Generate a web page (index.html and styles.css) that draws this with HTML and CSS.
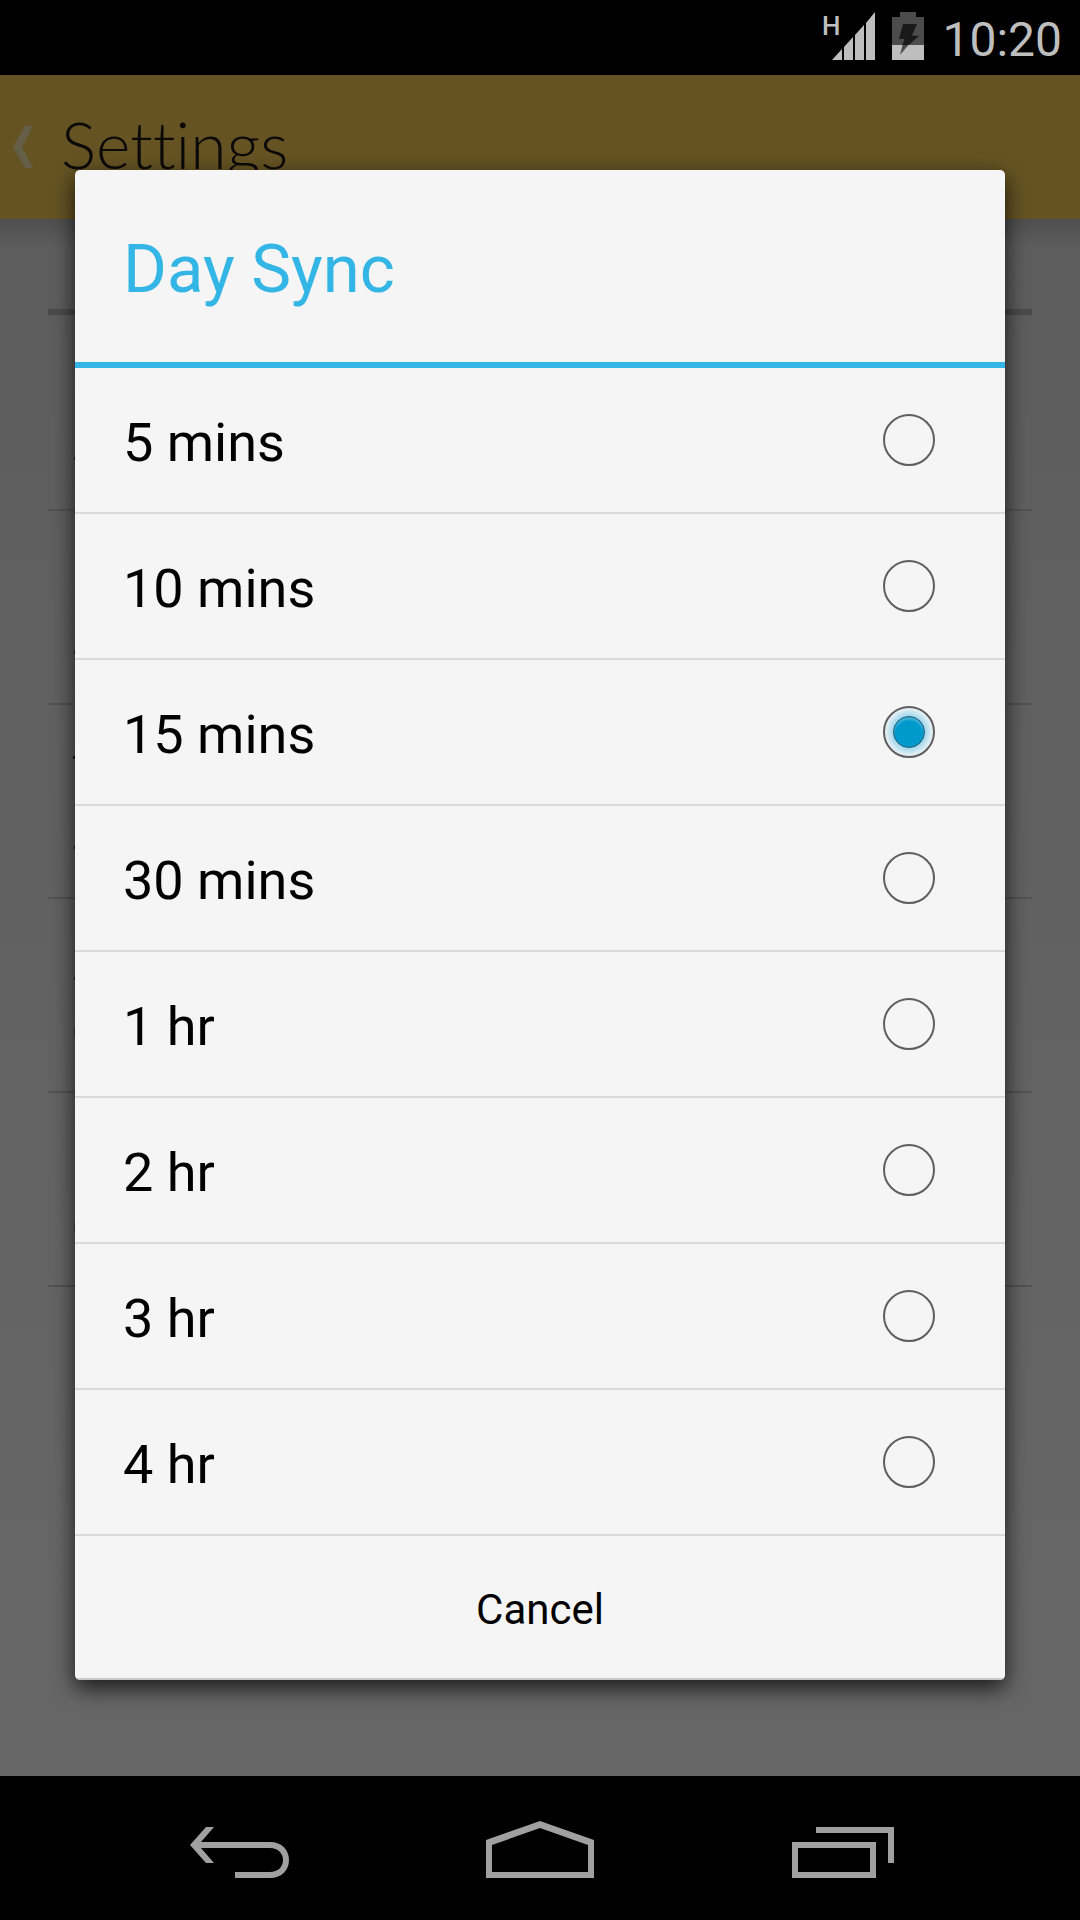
FILE: index.html
```html
<!DOCTYPE html>
<html lang="en">
<head>
<meta charset="utf-8">
<meta name="viewport" content="width=device-width, initial-scale=1">
<title>Settings</title>
<link rel="stylesheet" href="styles.css">
</head>
<body>
<div class="screen">
  <header class="status">
    <span class="network">H</span>
    <svg class="signal" viewBox="0 0 43 48" aria-hidden="true"><path d="M0 48 10 37V48ZM12 35 21 25V48H12ZM23 23 32 13V48H23ZM34 11 43 0V48H34Z"/></svg>
    <svg class="battery" viewBox="0 0 32 48" aria-hidden="true">
      <path fill="#4c4c4c" d="M8 0H24V5H32V33H0V5H8Z"/>
      <path fill="#bebebe" d="M0 33H32V48H0Z"/>
      <path fill="#1a1a1a" d="M11 12H25L20 23.500 27 24 16.500 33H10.500L12.500 27H7Z"/>
      <path fill="#4c4c4c" d="M10.500 33H16.500L8 43Z"/>
    </svg>
    <time class="clock">10:20</time>
  </header>

  <main class="stage">
    <div class="page">
      <div class="appbar">
        <svg class="chevron" viewBox="0 0 20 42" aria-hidden="true"><path d="M12 0H20L9 21 20 42H12L0 21Z"/></svg>
        <h1 class="page-title">Settings</h1>
      </div>
      <div class="content">
        <div class="section-head"></div>
        <div class="pref"><svg class="edge" viewBox="0 0 2 192"><path d="M1 142h1v3h-1z"/></svg></div>
        <div class="pref"><svg class="edge" viewBox="0 0 2 192"><path d="M1 140h1v3h-1z"/></svg></div>
        <div class="pref"><svg class="edge" viewBox="0 0 2 192"><path d="M0 51h2v3h-2zM1 141h1v3h-1z"/></svg></div>
        <div class="pref"><svg class="edge" viewBox="0 0 2 192"><path d="M1 78h1v3h-1z"/><path class="faint" d="M1 129h1v9h-1z"/></svg></div>
        <div class="pref"><svg class="edge" viewBox="0 0 2 192"><path class="faint" d="M1 129h1v9h-1z"/></svg></div>
      </div>
    </div>

    <form class="dialog" role="dialog" aria-labelledby="dialog-title">
      <h2 class="dialog-title" id="dialog-title">Day Sync</h2>
      <label class="option"><span class="option-text">5 mins</span><input class="radio" type="radio" name="sync" value="5"></label>
      <label class="option"><span class="option-text">10 mins</span><input class="radio" type="radio" name="sync" value="10"></label>
      <label class="option"><span class="option-text">15 mins</span><input class="radio" type="radio" name="sync" value="15" checked></label>
      <label class="option"><span class="option-text">30 mins</span><input class="radio" type="radio" name="sync" value="30"></label>
      <label class="option"><span class="option-text">1 hr</span><input class="radio" type="radio" name="sync" value="60"></label>
      <label class="option"><span class="option-text">2 hr</span><input class="radio" type="radio" name="sync" value="120"></label>
      <label class="option"><span class="option-text">3 hr</span><input class="radio" type="radio" name="sync" value="180"></label>
      <label class="option"><span class="option-text">4 hr</span><input class="radio" type="radio" name="sync" value="240"></label>
      <button class="cancel" type="button">Cancel</button>
    </form>
  </main>

  <nav class="navbar">
    <button class="nav-button" type="button" aria-label="Back">
      <svg class="nav-icon" viewBox="0 0 108 60"><path d="M4 27 20 9H28L15 24H84C96 24 103 32 103 42S96 60 84 60H49V54H84C92 54 97 49 97 42S92 30 84 30H15L28 45H20Z"/></svg>
    </button>
    <button class="nav-button" type="button" aria-label="Home">
      <svg class="nav-icon" viewBox="0 0 108 60"><path fill-rule="evenodd" d="M0 22 54 3 108 22V60H0ZM6 27V54H102V27L54 10Z"/></svg>
    </button>
    <button class="nav-button" type="button" aria-label="Recent apps">
      <svg class="nav-icon" viewBox="0 0 108 60"><path fill-rule="evenodd" d="M30 9H108V45H102V15H30ZM6 24H90V60H6ZM12 30V54H84V30Z"/></svg>
    </button>
  </nav>
</div>
</body>
</html>
```
FILE: styles.css
```css
* {
  box-sizing: border-box;
}

body {
  margin: 0;
  background: #000;
  font-family: Roboto, "Liberation Sans", sans-serif;
}

.screen {
  display: flex;
  flex-direction: column;
  min-height: 100vh;
}

/* Status bar */
.status {
  display: flex;
  justify-content: flex-end;
  height: 75px;
  padding: 12px 18px 0 0;
  color: #bebebe;
}

.network {
  margin-right: -8px;
  font-size: 26px;
  font-weight: 500;
  line-height: 28px;
}

.signal {
  width: 43px;
  height: 48px;
  margin-right: 17px;
  fill: #bebebe;
}

.battery {
  width: 32px;
  height: 48px;
  margin-right: 18px;
}

.clock {
  font-size: 48px;
  line-height: 56px;
}

/* The dialog shares one grid cell with the dimmed page behind it */
.stage {
  display: grid;
  flex: 1;
}

.page,
.dialog {
  grid-area: 1 / 1;
}

.page {
  background: linear-gradient(#5c5c5c, #666 90%);
}

.appbar {
  display: flex;
  align-items: center;
  gap: 28px;
  height: 144px;
  padding-left: 13px;
  background: #655323;
}

.chevron {
  width: 20px;
  height: 42px;
  fill: #655f48;
}

.page-title {
  margin: 0;
  padding-bottom: 6px;
  color: #0c0a08;
  font: 300 66px/72px Lato, sans-serif;
  font-variant-ligatures: none;
}

.content {
  padding: 0 48px;
  background: linear-gradient(#4e4e4e, #56565600 28px);
}

.section-head {
  height: 96px;
  border-bottom: 6px solid #4b4b4b;
}

.pref {
  height: 194px;
  padding-left: 25px;
  border-bottom: 2px solid #525252;
}

.section-head + .pref {
  height: 196px;
}

.edge {
  display: block;
  width: 2px;
  height: 192px;
  fill: #1c1c1c;
}

.faint {
  opacity: 0.4;
}

/* Dialog */
.dialog {
  align-self: start;
  margin: 95px 75px 96px;
  overflow: hidden;
  border-radius: 5px;
  background: #f5f5f5;
  box-shadow: 0 8px 22px rgba(0, 0, 0, 0.75);
  color: #000;
}

.dialog-title {
  height: 198px;
  margin: 0;
  padding: 3px 48px 0;
  border-bottom: 6px solid #33b5e5;
  color: #33b5e5;
  font-size: 67px;
  font-weight: 400;
  line-height: 192px;
}

.option {
  display: flex;
  align-items: center;
  justify-content: space-between;
  height: 146px;
  padding: 0 70px 0 48px;
  border-bottom: 2px solid #dadada;
  font-size: 54px;
}

.option-text {
  padding-top: 4px;
}

.radio {
  appearance: none;
  display: grid;
  place-items: center;
  width: 52px;
  height: 52px;
  margin: 0;
  border: 2px solid #5f5f5f;
  border-radius: 50%;
}

.radio:checked {
  background: radial-gradient(circle, #8fd0e9 14px, #ecf3f6 24px);
}

.radio:checked::before {
  content: "";
  width: 30px;
  height: 30px;
  border: 1px solid #2c5f73;
  border-radius: 50%;
  background: #0099cc;
  box-shadow: inset 0 3px 2px #3fb0d8;
}

.cancel {
  display: block;
  width: 100%;
  height: 144px;
  padding: 6px 0 0;
  border: 0;
  border-bottom: 2px solid #c8c8c8;
  background: none;
  color: #000;
  font: 400 42px/48px Roboto, "Liberation Sans", sans-serif;
}

/* Navigation bar */
.navbar {
  display: grid;
  grid-template-columns: repeat(3, 1fr);
  height: 144px;
  padding: 0 90px;
}

.nav-button {
  display: flex;
  align-items: center;
  justify-content: center;
  padding: 0;
  border: 0;
  background: none;
}

.nav-icon {
  width: 108px;
  height: 60px;
  fill: #a0a0a0;
}
```
